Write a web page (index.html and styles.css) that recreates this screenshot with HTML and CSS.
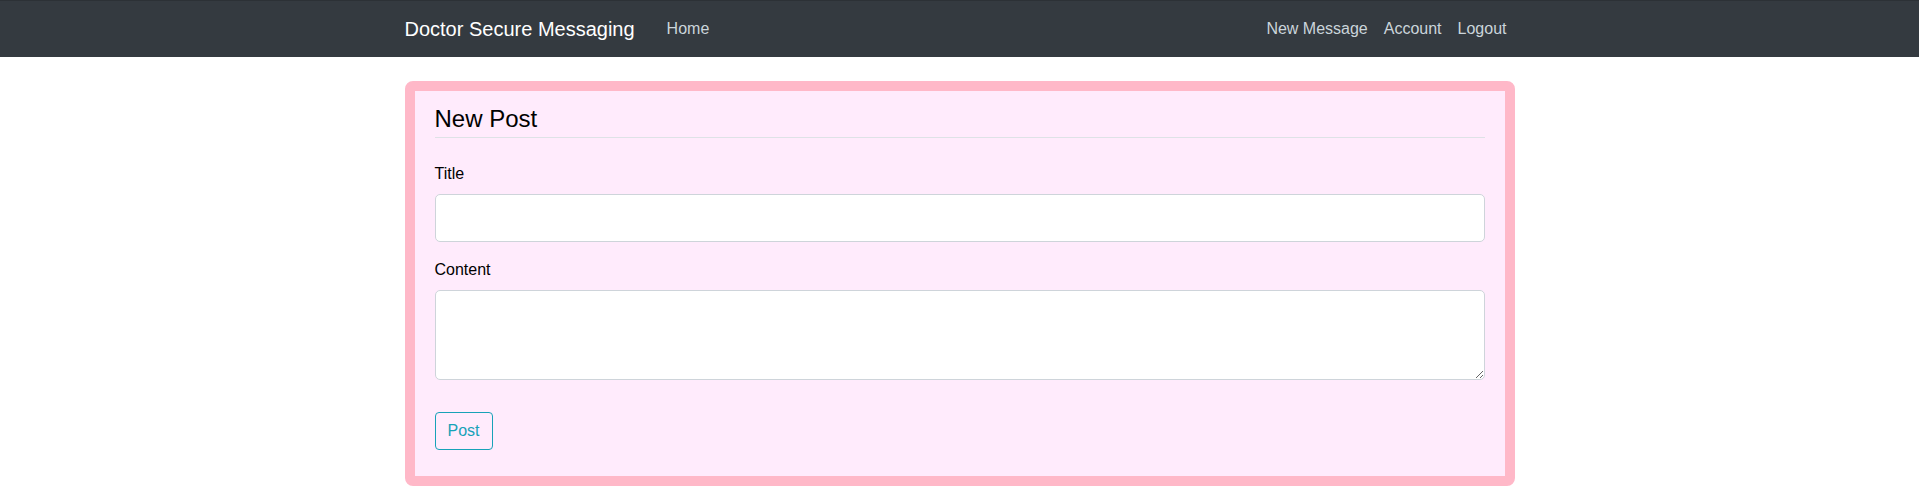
FILE: index.html
```html
<!DOCTYPE html>
<html lang="en">
<head>
<meta charset="utf-8">
<title>New Post</title>
<link rel="stylesheet" href="styles.css">
</head>
<body>
<header class="site-header">
  <nav class="navbar">
    <div class="container nav-inner">
      <a class="brand" href="#">Doctor Secure Messaging</a>
      <div class="nav-left">
        <a class="nav-link" href="#">Home</a>
      </div>
      <div class="nav-right">
        <a class="nav-link" href="#">New Message</a>
        <a class="nav-link" href="#">Account</a>
        <a class="nav-link" href="#">Logout</a>
      </div>
    </div>
  </nav>
</header>
<main class="container main">
  <div class="content-section">
    <form>
      <fieldset class="fieldset">
        <legend class="legend">New Post</legend>
        <div class="form-group">
          <label class="label" for="title">Title</label>
          <input class="form-control" id="title" type="text">
        </div>
        <div class="form-group">
          <label class="label" for="content">Content</label>
          <textarea class="form-control textarea" id="content"></textarea>
        </div>
      </fieldset>
      <div class="form-group">
        <button class="btn-outline-info" type="button">Post</button>
      </div>
    </form>
  </div>
</main>
</body>
</html>
```

FILE: styles.css
```css
* { box-sizing: border-box; }
html, body { margin: 0; padding: 0; }
body {
  font-family: "Liberation Sans", Arial, Helvetica, sans-serif;
  font-size: 16px;
  line-height: 1.5;
  color: #212529;
  background: #ffffff;
}
.container {
  width: 1140px;
  margin: 0 auto;
  padding: 0 15px;
}
.navbar {
  background: #343a40;
  height: 57px;
  padding: 8px 0;
  border-top: 1px solid #2c3136;
}
.nav-inner {
  display: flex;
  align-items: center;
  height: 40px;
}
.brand {
  font-size: 20px;
  line-height: 30px;
  padding: 5px 0;
  color: #ffffff;
  text-decoration: none;
  margin-right: 24px;
}
.nav-left { display: flex; flex: 1; }
.nav-right { display: flex; }
.nav-link {
  color: #cbd5db;
  text-decoration: none;
  padding: 8px;
  line-height: 24px;
}
.main { padding-top: 24px; }
.content-section {
  background: #ffebfc;
  border: 10px solid #ffb8c8;
  border-radius: 8px;
  padding: 10px 20px;
}
.fieldset {
  border: 0;
  margin: 0 0 16px;
  padding: 0;
  min-width: 0;
}
.legend {
  display: block;
  width: 100%;
  padding: 0;
  font-size: 24px;
  line-height: 36px;
  border-bottom: 1px solid #dee2e6;
  margin-bottom: 24px;
  color: #000;
}
.form-group { margin-bottom: 16px; }
.label {
  display: inline-block;
  margin-bottom: 8px;
  color: #000;
}
.form-control {
  display: block;
  width: 100%;
  height: 48px;
  padding: 8px 16px;
  font-family: inherit;
  font-size: 20px;
  line-height: 1.5;
  color: #495057;
  background: #ffffff;
  border: 1px solid #ced4da;
  border-radius: 5px;
  margin: 0;
}
.textarea {
  height: 90px;
  resize: vertical;
}
.btn-outline-info {
  font-family: inherit;
  font-size: 16px;
  line-height: 24px;
  padding: 6px 12px;
  color: #17a2b8;
  background: transparent;
  border: 1px solid #17a2b8;
  border-radius: 4px;
  margin: 0;
}
```
